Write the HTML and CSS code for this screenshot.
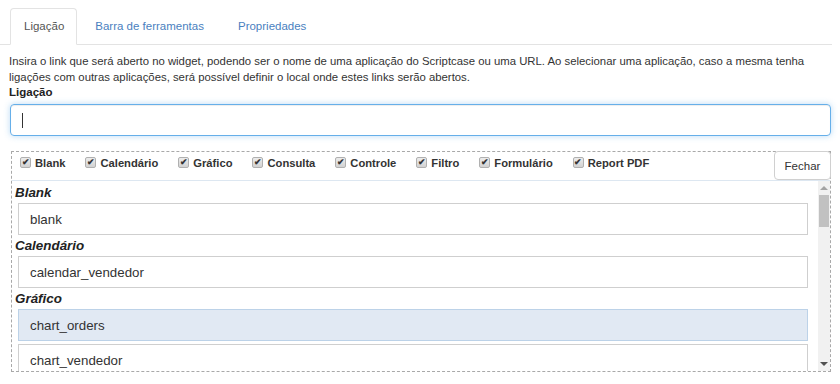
FILE: index.html
```html
<!DOCTYPE html>
<html lang="pt">
<head>
<meta charset="utf-8">
<title>Ligação</title>
<link rel="stylesheet" href="styles.css">
</head>
<body>
<div class="page">
  <ul class="tabs">
    <li class="tab active">Ligação</li>
    <li class="tab">Barra de ferramentas</li>
    <li class="tab">Propriedades</li>
  </ul>
  <div class="content">
    <p class="desc">Insira o link que será aberto no widget, podendo ser o nome de uma aplicação do Scriptcase ou uma URL. Ao selecionar uma aplicação, caso a mesma tenha ligações com outras aplicações, será possível definir o local onde estes links serão abertos.</p>
    <div class="label">Ligação</div>
    <div class="field"><span class="caret"></span></div>
    <div class="picker">
      <div class="filters">
        <label class="chk"><span class="box">✔</span>Blank</label>
        <label class="chk"><span class="box">✔</span>Calendário</label>
        <label class="chk"><span class="box">✔</span>Gráfico</label>
        <label class="chk"><span class="box">✔</span>Consulta</label>
        <label class="chk"><span class="box">✔</span>Controle</label>
        <label class="chk"><span class="box">✔</span>Filtro</label>
        <label class="chk"><span class="box">✔</span>Formulário</label>
        <label class="chk"><span class="box">✔</span>Report PDF</label>
        <button class="close">Fechar</button>
      </div>
      <div class="listwrap">
        <div class="list">
          <div class="group-title">Blank</div>
          <div class="item">blank</div>
          <div class="group-title">Calendário</div>
          <div class="item">calendar_vendedor</div>
          <div class="group-title">Gráfico</div>
          <div class="item selected">chart_orders</div>
          <div class="item">chart_vendedor</div>
        </div>
        <div class="scrollbar">
          <span class="arrow up"></span>
          <span class="thumb"></span>
          <span class="track"></span>
          <span class="arrow down"></span>
        </div>
      </div>
    </div>
  </div>
</div>
</body>
</html>
```

FILE: styles.css
```css
* { box-sizing: border-box; }
html, body { margin: 0; padding: 0; background: #fff; }
body { font-family: "Liberation Sans", Arial, sans-serif; color: #333; }

.page { width: 832px; padding-top: 8px; }

.tabs {
  list-style: none;
  margin: 0;
  padding: 0 0 0 10px;
  display: flex;
  border-bottom: 1px solid #e3e3e3;
}
.tab {
  font-size: 11.5px;
  line-height: 17px;
  padding: 9px 15px;
  margin-right: 2px;
  margin-bottom: -1px;
  border: 1px solid transparent;
  border-radius: 4px 4px 0 0;
  color: #4a7fc0;
}
.tab.active {
  color: #555;
  background: #fff;
  border-color: #e3e3e3 #e3e3e3 transparent;
  padding: 9px 12px 9px 13px;
}

.content { padding: 0 1px 0 9px; }

.desc {
  margin: 8px 0 0;
  font-size: 11.35px;
  line-height: 16px;
  color: #333;
}
.label {
  font-size: 11.5px;
  line-height: 14px;
  font-weight: bold;
  color: #222;
}
.field {
  margin: 5px 0 0 1px;
  height: 32px;
  border: 1px solid #66afe9;
  border-radius: 4px;
  box-shadow: inset 0 1px 1px rgba(0,0,0,.075), 0 0 6px rgba(102,175,233,.45);
  display: flex;
  align-items: center;
  padding-left: 11px;
}
.caret { width: 1px; height: 15px; background: #333; }

.picker {
  margin: 15px 0 0 2px;
  border: 1px dashed #a9a9a9;
  height: 221px;
  display: flex;
  flex-direction: column;
}
.filters {
  display: flex;
  align-items: center;
  height: 29px;
  padding-left: 8px;
  border-bottom: 1px solid #dde7f1;
  flex: none;
}
.chk {
  display: flex;
  align-items: center;
  font-size: 11.2px;
  font-weight: bold;
  color: #333;
  margin-right: 20px;
  margin-top: -7px;
}
.box {
  width: 11px;
  height: 11px;
  border: 1px solid #b0b0b0;
  border-radius: 2px;
  background: linear-gradient(#ececec, #d2d2d2);
  font-size: 9px;
  line-height: 9px;
  text-align: center;
  color: #333;
  margin-right: 4px;
}
.close {
  margin: -1px -1px 0 auto;
  align-self: flex-start;
  height: 29px;
  width: 57px;
  border: 1px solid #d0d0d0;
  border-radius: 4px;
  background: #fff;
  font-family: "Liberation Sans", Arial, sans-serif;
  font-size: 11.5px;
  color: #333;
  padding: 0;
}

.listwrap {
  flex: 1;
  display: flex;
  min-height: 0;
}
.list {
  flex: 1;
  overflow: hidden;
  padding: 1px 10px 0 3px;
}
.group-title {
  font-size: 13.4px;
  line-height: 21px;
  font-weight: bold;
  font-style: italic;
  color: #222;
}
.item {
  margin-left: 3px;
  height: 32px;
  border: 1px solid #cfcfcf;
  background: #fff;
  font-size: 13.3px;
  color: #333;
  display: flex;
  align-items: center;
  padding-left: 11px;
}
.item + .item { margin-top: 3px; }
.item.selected {
  background: #e1e9f3;
  border-color: #bcd2e8;
}

.scrollbar {
  width: 12px;
  flex: none;
  background: #f1f1f1;
  display: flex;
  flex-direction: column;
  align-items: center;
}
.arrow {
  width: 0;
  height: 0;
  border-left: 4px solid transparent;
  border-right: 4px solid transparent;
  flex: none;
}
.arrow.up { border-bottom: 4px solid #a3a3a3; margin: 5px 0 5px; }
.arrow.down { border-top: 4px solid #505050; margin: 5px 0 5px; }
.thumb {
  width: 10px;
  height: 32px;
  background: #c1c1c1;
  flex: none;
}
.track { flex: 1; }
```
